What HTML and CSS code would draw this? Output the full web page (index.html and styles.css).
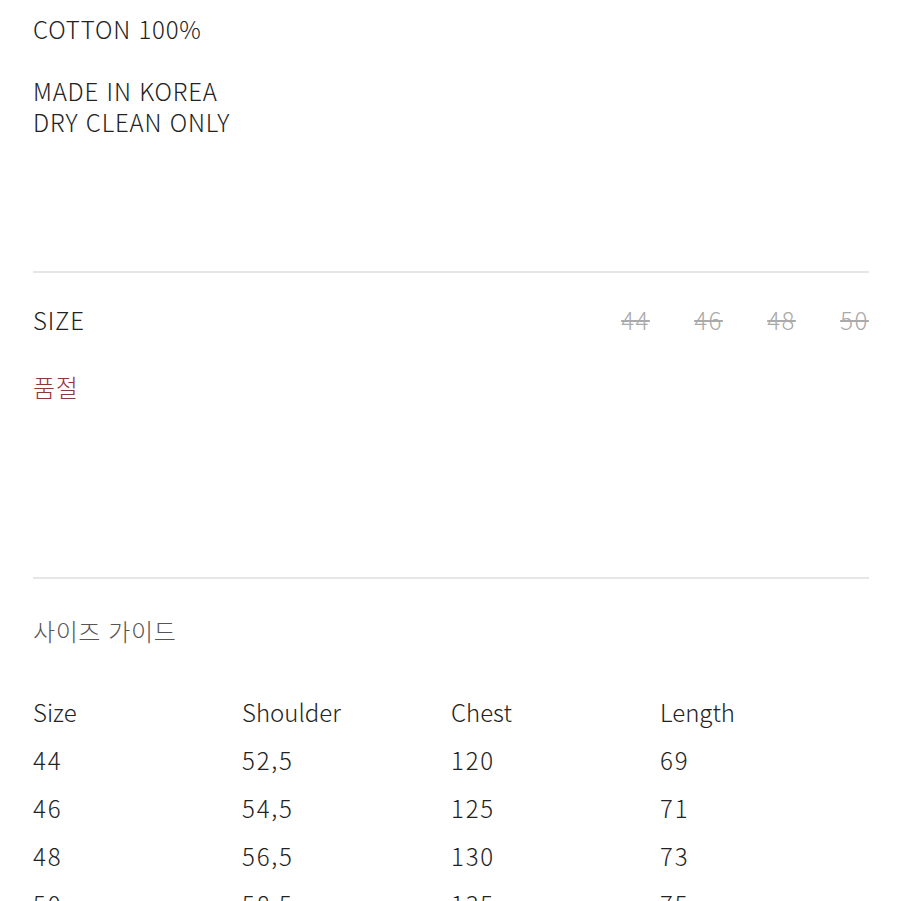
FILE: index.html
```html
<!DOCTYPE html>
<html lang="ko">
<head>
<meta charset="utf-8">
<link rel="stylesheet" href="styles.css">
</head>
<body>
<div class="page">
  <div class="desc">
    <p>COTTON 100%</p>
    <p class="blank">&nbsp;</p>
    <p>MADE IN KOREA</p>
    <p>DRY CLEAN ONLY</p>
  </div>
  <hr class="divider first">
  <div class="size-row">
    <span class="label">SIZE</span>
    <div class="options">
      <span class="opt">44</span>
      <span class="opt">46</span>
      <span class="opt">48</span>
      <span class="opt">50</span>
    </div>
  </div>
  <p class="soldout">품절</p>
  <hr class="divider second">
  <p class="guide-title">사이즈 가이드</p>
  <div class="table">
    <span>Size</span><span>Shoulder</span><span>Chest</span><span>Length</span>
    <span class="num">44</span><span class="num">52,5</span><span class="num">120</span><span class="num">69</span>
    <span class="num">46</span><span class="num">54,5</span><span class="num">125</span><span class="num">71</span>
    <span class="num">48</span><span class="num">56,5</span><span class="num">130</span><span class="num">73</span>
    <span class="num">50</span><span class="num">58,5</span><span class="num">135</span><span class="num">75</span>
  </div>
</div>
</body>
</html>
```

FILE: styles.css
```css
html, body {
  margin: 0;
  padding: 0;
  background: #ffffff;
}
body {
  font-family: "Noto Sans CJK KR", "Noto Sans", sans-serif;
  font-weight: 300;
  color: #222222;
  font-size: 24px;
}
.page {
  padding: 13px 32px 0 33px;
}
p {
  margin: 0;
}
.desc p {
  line-height: 31px;
  height: 31px;
  letter-spacing: 0.8px;
}
.divider {
  border: 0;
  height: 2px;
  background: #e6e6e6;
  margin: 0;
}
.divider.first {
  margin-top: 134px;
}
.size-row {
  display: flex;
  justify-content: space-between;
  align-items: center;
  height: 31px;
  margin-top: 31px;
}
.label {
  letter-spacing: 0.8px;
}
.options {
  display: flex;
  gap: 44px;
}
.opt {
  color: #aaaaaa;
  width: 29px;
  text-align: center;
  letter-spacing: 1.5px;
  text-decoration: line-through;
  text-decoration-thickness: 2px;
}
.soldout {
  color: #8b3a3a;
  line-height: 31px;
  margin-top: 36px;
  letter-spacing: 0.6px;
}
.divider.second {
  margin-top: 175px;
}
.guide-title {
  color: #555555;
  line-height: 31px;
  margin-top: 36px;
  letter-spacing: 0.6px;
}
.table {
  display: grid;
  grid-template-columns: 209px 209px 209px 209px;
  grid-auto-rows: 48px;
  margin-top: 50px;
  line-height: 31px;
}
.table span {
  display: block;
}
.table .num {
  letter-spacing: 1.8px;
}
```
